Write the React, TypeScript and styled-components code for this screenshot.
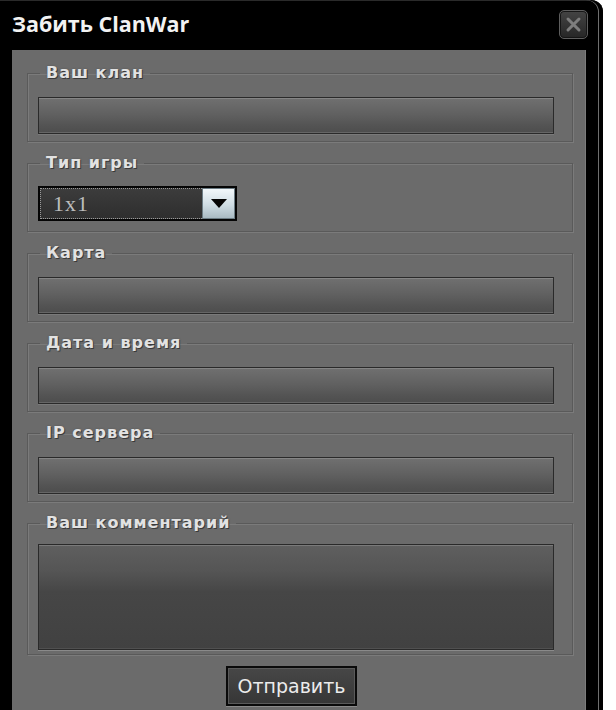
import React from "react";
import styled, { createGlobalStyle } from "styled-components";

const Global = createGlobalStyle`
  html, body { margin: 0; padding: 0; background: #ffffff; }
  body { font-family: "DejaVu Sans", "Liberation Sans", sans-serif; }
`;

const Window = styled.div`
  width: 603px;
  height: 710px;
  background: #000;
  border-top-right-radius: 12px;
  box-shadow: inset -4px 0 0 #000, inset -5px 0 0 #6f6f6f, inset 0 1px 0 #2a2a2a;
  display: flex;
  flex-direction: column;
  overflow: hidden;
`;

const TitleBar = styled.div`
  height: 50px;
  flex: none;
  display: flex;
  align-items: center;
  padding: 0 15px 0 12px;
`;

const Title = styled.h1`
  margin: -4px 0 0 0;
  font-family: "Open Sans", "Liberation Sans", sans-serif;
  font-weight: 700;
  font-size: 21.5px;
  color: #f2f2f2;
  white-space: nowrap;
`;

const CloseButton = styled.button`
  margin-left: auto;
  width: 29px;
  height: 29px;
  margin-top: -2px;
  padding: 0;
  border-radius: 5px;
  border: 1px solid #5e5e5e;
  background: linear-gradient(#444, #262626);
  box-shadow: inset 0 0 0 1px #151515;
  display: flex;
  align-items: center;
  justify-content: center;
`;

const Body = styled.div`
  flex: 1;
  display: flex;
  padding: 0 17px 0 12px;
`;

const Panel = styled.div`
  flex: 1;
  background: #6b6b6b;
  box-shadow: inset -1px 0 0 #7c7c7c;
  padding: 13px 13px 0 15px;
  display: flex;
  flex-direction: column;
  gap: 11px;
`;

const Group = styled.fieldset<{ $pt: number; $pb: number }>`
  margin: 0;
  padding: ${(p) => p.$pt}px 18px ${(p) => p.$pb}px 10px;
  border: 1px solid #5a5a5a;
  box-shadow: inset 1px 1px 0 #7b7b7b, 1px 1px 0 #7b7b7b;
  min-width: 0;
`;

const Legend = styled.legend`
  margin-left: 2px;
  padding: 0 6px;
  font-size: 16px;
  font-weight: 700;
  line-height: 20px;
  letter-spacing: 1px;
  color: #e2e2e2;
  text-shadow: 1px 1px 0 #3a3a3a, 0 0 2px #555;
`;

const TextInput = styled.div`
  height: 35px;
  border: 1px solid #2a2a2a;
  background: linear-gradient(#707070, #616161 45%, #535353 80%, #4d4d4d);
  box-shadow: inset 0 1px 0 #858585, inset 0 -1px 0 #666, 0 1px 0 #7a7a7a;
`;

const TextArea = styled.div`
  height: 104px;
  border: 1px solid #2a2a2a;
  background: linear-gradient(#5f5f5f, #555555 25%, #464646 45%, #414141);
  box-shadow: inset 0 1px 0 #7a7a7a, 0 1px 0 #8a8a8a, inset 0 -1px 0 #505050;
`;

const Select = styled.div`
  width: 199px;
  height: 35px;
  background: #050505;
  padding: 2px;
  box-sizing: border-box;
  display: flex;
`;

const SelectValue = styled.div`
  flex: 1;
  border: 1px dotted #9a9a9a;
  border-right: none;
  background: linear-gradient(#3c3c3c, #2e2e2e);
  display: flex;
  align-items: center;
  padding-left: 12px;
  font-family: "Liberation Serif", "DejaVu Serif", serif;
  font-size: 22px;
  color: #bdbdbd;
  letter-spacing: 1px;
`;

const SelectArrow = styled.div`
  width: 31px;
  background: linear-gradient(#f2f7fa, #cfdde4 55%, #a9bac3);
  border: 1px solid #6c7c84;
  display: flex;
  align-items: center;
  justify-content: center;
`;

const Footer = styled.div`
  display: flex;
  padding-left: 199px;
`;

const SubmitButton = styled.button`
  width: 131px;
  height: 40px;
  border: 2px solid #0a0a0a;
  background: linear-gradient(#474747, #363636);
  box-shadow: inset 0 0 0 1px #5a5a5a, 0 1px 0 #8a8a8a;
  color: #ececec;
  font-family: "DejaVu Sans", sans-serif;
  font-size: 19px;
  padding: 0;
`;

const fields = [
  { label: "Ваш клан" },
  { label: "Тип игры", select: true },
  { label: "Карта" },
  { label: "Дата и время" },
  { label: "IP сервера" },
];

export default function App() {
  return (
    <>
      <Global />
      <Window>
        <TitleBar>
          <Title>Забить ClanWar</Title>
          <CloseButton aria-label="close">
            <svg width="17" height="17" viewBox="0 0 17 17">
              <path d="M3 3 L14 14 M14 3 L3 14" stroke="#7e7e7e" strokeWidth="3" strokeLinecap="round" />
            </svg>
          </CloseButton>
        </TitleBar>
        <Body>
          <Panel>
            {fields.map((f) =>
              f.select ? (
                <Group key={f.label} $pt={13} $pb={10}>
                  <Legend>{f.label}</Legend>
                  <Select>
                    <SelectValue>1x1</SelectValue>
                    <SelectArrow>
                      <svg width="16" height="9" viewBox="0 0 16 9">
                        <path d="M0 0 H16 L8 9 Z" fill="#050505" />
                      </svg>
                    </SelectArrow>
                  </Select>
                </Group>
              ) : (
                <Group key={f.label} $pt={14} $pb={7}>
                  <Legend>{f.label}</Legend>
                  <TextInput />
                </Group>
              )
            )}
            <Group $pt={11} $pb={4}>
              <Legend>Ваш комментарий</Legend>
              <TextArea />
            </Group>
            <Footer>
              <SubmitButton>Отправить</SubmitButton>
            </Footer>
          </Panel>
        </Body>
      </Window>
    </>
  );
}
